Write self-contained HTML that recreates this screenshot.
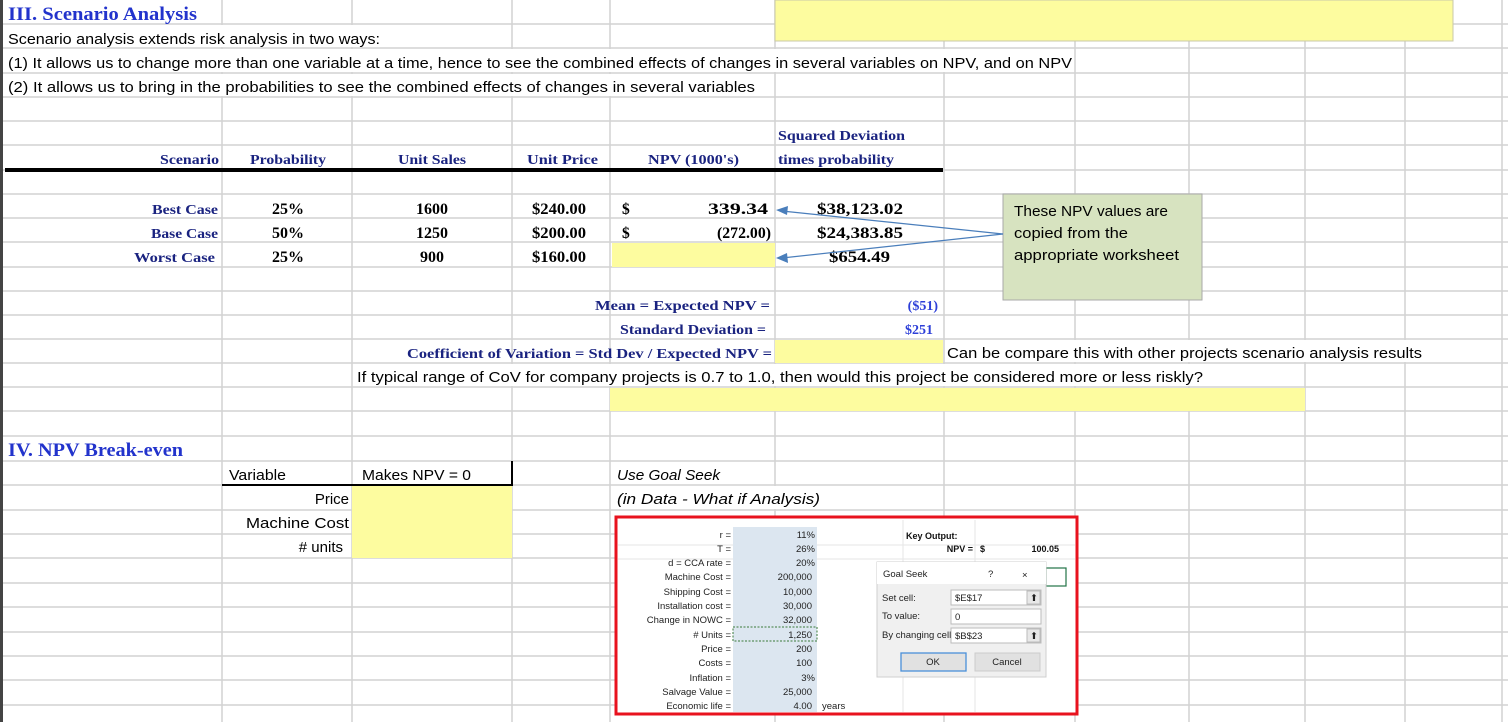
<!DOCTYPE html>
<html><head><meta charset="utf-8"><style>
html,body{margin:0;padding:0;background:#fff;}
svg{display:block}
.c{font-family:"Liberation Sans",sans-serif;font-size:15px;fill:#000}
.t{font-family:"Liberation Serif",serif;font-weight:bold;font-size:14px;fill:#1a2380}
.tb{font-family:"Liberation Serif",serif;font-weight:bold;font-size:15.5px;fill:#000}
.v{font-family:"Liberation Serif",serif;font-weight:bold;font-size:14px;fill:#2d3fd8}
.h{font-family:"Liberation Serif",serif;font-weight:bold;font-size:19px;fill:#2233cc}
.s{font-family:"Liberation Sans",sans-serif;font-size:9.5px;fill:#222}
.sb{font-family:"Liberation Sans",sans-serif;font-size:9px;font-weight:bold;fill:#111}
</style></head><body>
<svg width="1508" height="722" viewBox="0 0 1508 722" xmlns="http://www.w3.org/2000/svg">
<rect width="1508" height="722" fill="#fff"/>
<g stroke="#d2d2d2" stroke-width="1.5">
<line x1="0" y1="24" x2="1508" y2="24"/><line x1="0" y1="48" x2="1508" y2="48"/><line x1="0" y1="73" x2="1508" y2="73"/><line x1="0" y1="97" x2="1508" y2="97"/><line x1="0" y1="121" x2="1508" y2="121"/><line x1="0" y1="145" x2="1508" y2="145"/><line x1="0" y1="170" x2="1508" y2="170"/><line x1="0" y1="194" x2="1508" y2="194"/><line x1="0" y1="218" x2="1508" y2="218"/><line x1="0" y1="242" x2="1508" y2="242"/><line x1="0" y1="267" x2="1508" y2="267"/><line x1="0" y1="291" x2="1508" y2="291"/><line x1="0" y1="315" x2="1508" y2="315"/><line x1="0" y1="339" x2="1508" y2="339"/><line x1="0" y1="363" x2="1508" y2="363"/><line x1="0" y1="387" x2="1508" y2="387"/><line x1="0" y1="411" x2="1508" y2="411"/><line x1="0" y1="436" x2="1508" y2="436"/><line x1="0" y1="461" x2="1508" y2="461"/><line x1="0" y1="485" x2="1508" y2="485"/><line x1="0" y1="510" x2="1508" y2="510"/><line x1="0" y1="534" x2="1508" y2="534"/><line x1="0" y1="558" x2="1508" y2="558"/><line x1="0" y1="583" x2="1508" y2="583"/><line x1="0" y1="607" x2="1508" y2="607"/><line x1="0" y1="632" x2="1508" y2="632"/><line x1="0" y1="656" x2="1508" y2="656"/><line x1="0" y1="680" x2="1508" y2="680"/><line x1="0" y1="705" x2="1508" y2="705"/>
<line x1="222" y1="0" x2="222" y2="722"/><line x1="352" y1="0" x2="352" y2="722"/><line x1="512" y1="0" x2="512" y2="722"/><line x1="610" y1="0" x2="610" y2="722"/><line x1="775" y1="0" x2="775" y2="722"/><line x1="944" y1="0" x2="944" y2="722"/><line x1="1075" y1="0" x2="1075" y2="722"/><line x1="1189" y1="0" x2="1189" y2="722"/><line x1="1305" y1="0" x2="1305" y2="722"/><line x1="1405" y1="0" x2="1405" y2="722"/><line x1="1502" y1="0" x2="1502" y2="722"/>
</g>
<g fill="#fff">
<rect x="4" y="25" width="376" height="22"/>
<rect x="4" y="49" width="1070" height="23"/>
<rect x="4" y="74" width="760" height="22"/>
<rect x="354" y="364" width="949" height="22"/>
<rect x="946" y="340" width="478" height="22"/>
<rect x="513" y="340" width="96" height="22"/>
<rect x="612" y="486" width="210" height="23"/>
</g>
<rect x="0" y="0" width="3" height="722" fill="#444"/>
<rect x="775" y="0" width="678" height="41" fill="#fdfc9f" stroke="#c9c9a8"/>
<rect x="612" y="243" width="163" height="24" fill="#fdfc9f"/>
<rect x="775" y="340" width="168" height="23" fill="#fdfc9f"/>
<rect x="610" y="388" width="695" height="23" fill="#fdfc9f"/>
<rect x="352" y="486" width="160" height="72" fill="#fdfc9f"/>
<text x="8" y="20" class="h" textLength="189" lengthAdjust="spacingAndGlyphs">III. Scenario Analysis</text>
<text x="8" y="44" class="c" textLength="372" lengthAdjust="spacingAndGlyphs">Scenario analysis extends risk analysis in two ways:</text>
<text x="8" y="68" class="c" textLength="1064" lengthAdjust="spacingAndGlyphs">(1) It allows us to change more than one variable at a time, hence to see the combined effects of changes in several variables on NPV, and  on NPV</text>
<text x="8" y="92" class="c" textLength="747" lengthAdjust="spacingAndGlyphs">(2) It allows us to bring in the probabilities  to see the combined effects of changes in several variables</text>
<text x="778" y="140" class="t" textLength="127" lengthAdjust="spacingAndGlyphs">Squared Deviation</text>
<text x="778" y="164" class="t" textLength="116" lengthAdjust="spacingAndGlyphs">times probability</text>
<text x="160" y="164" class="t" textLength="59" lengthAdjust="spacingAndGlyphs">Scenario</text>
<text x="250" y="164" class="t" textLength="76" lengthAdjust="spacingAndGlyphs">Probability</text>
<text x="398" y="164" class="t" textLength="68" lengthAdjust="spacingAndGlyphs">Unit Sales</text>
<text x="527" y="164" class="t" textLength="71" lengthAdjust="spacingAndGlyphs">Unit Price</text>
<text x="648" y="164" class="t" textLength="91" lengthAdjust="spacingAndGlyphs">NPV (1000's)</text>
<rect x="5" y="168" width="938" height="4" fill="#000"/>
<text x="152" y="214" class="t" textLength="66" lengthAdjust="spacingAndGlyphs">Best Case</text>
<text x="151" y="238" class="t" textLength="67" lengthAdjust="spacingAndGlyphs">Base Case</text>
<text x="134" y="262" class="t" textLength="81" lengthAdjust="spacingAndGlyphs">Worst Case</text>
<text x="272" y="214" class="tb" textLength="32" lengthAdjust="spacingAndGlyphs">25%</text><text x="272" y="238" class="tb" textLength="32" lengthAdjust="spacingAndGlyphs">50%</text><text x="272" y="262" class="tb" textLength="32" lengthAdjust="spacingAndGlyphs">25%</text>
<text x="416" y="214" class="tb" textLength="32" lengthAdjust="spacingAndGlyphs">1600</text><text x="416" y="238" class="tb" textLength="32" lengthAdjust="spacingAndGlyphs">1250</text><text x="420" y="262" class="tb" textLength="24" lengthAdjust="spacingAndGlyphs">900</text>
<text x="532" y="214" class="tb" textLength="54" lengthAdjust="spacingAndGlyphs">$240.00</text><text x="532" y="238" class="tb" textLength="54" lengthAdjust="spacingAndGlyphs">$200.00</text><text x="532" y="262" class="tb" textLength="54" lengthAdjust="spacingAndGlyphs">$160.00</text>
<text x="622" y="214" class="tb">$</text><text x="622" y="238" class="tb">$</text>
<text x="708" y="214" class="tb" textLength="60" lengthAdjust="spacingAndGlyphs">339.34</text><text x="717" y="238" class="tb" textLength="54" lengthAdjust="spacingAndGlyphs">(272.00)</text>
<text x="817" y="214" class="tb" font-size="17" textLength="86" lengthAdjust="spacingAndGlyphs">$38,123.02</text>
<text x="817" y="238" class="tb" font-size="17" textLength="86" lengthAdjust="spacingAndGlyphs">$24,383.85</text>
<text x="829" y="262" class="tb" font-size="17" textLength="61" lengthAdjust="spacingAndGlyphs">$654.49</text>
<rect x="1003" y="194" width="199" height="106" fill="#d7e3c0" stroke="#a9a9a9"/>
<text x="1014" y="216" class="c" textLength="154" lengthAdjust="spacingAndGlyphs">These NPV values are</text>
<text x="1014" y="238" class="c" textLength="114" lengthAdjust="spacingAndGlyphs">copied from the</text>
<text x="1014" y="260" class="c" textLength="165" lengthAdjust="spacingAndGlyphs">appropriate worksheet</text>
<g stroke="#4a7ebb" stroke-width="1.2" fill="#4a7ebb">
<line x1="1003" y1="234" x2="782" y2="211"/>
<line x1="1003" y1="234" x2="782" y2="258"/>
<polygon points="776,210 788,206 787,215" stroke="none"/>
<polygon points="776,258 787,253 788,263" stroke="none"/>
</g>
<text x="770" y="310" class="t" text-anchor="end" textLength="175" lengthAdjust="spacingAndGlyphs">Mean = Expected NPV =</text>
<text x="938" y="310" class="v" text-anchor="end">($51)</text>
<text x="766" y="334" class="t" text-anchor="end" textLength="146" lengthAdjust="spacingAndGlyphs">Standard Deviation  =</text>
<text x="933" y="334" class="v" text-anchor="end">$251</text>
<text x="407" y="358" class="t" textLength="365" lengthAdjust="spacingAndGlyphs">Coefficient of Variation = Std Dev / Expected NPV =</text>
<text x="947" y="358" class="c" textLength="475" lengthAdjust="spacingAndGlyphs">Can be compare this with other projects scenario analysis results</text>
<text x="357" y="382" class="c" textLength="846" lengthAdjust="spacingAndGlyphs">If typical range of CoV for company projects is 0.7 to 1.0, then would this project be considered more or less riskly?</text>
<text x="8" y="456" class="h" textLength="175" lengthAdjust="spacingAndGlyphs">IV. NPV Break-even</text>
<text x="229" y="480" class="c" textLength="57" lengthAdjust="spacingAndGlyphs">Variable</text>
<text x="362" y="480" class="c" textLength="109" lengthAdjust="spacingAndGlyphs">Makes NPV = 0</text>
<rect x="222" y="484" width="291" height="2" fill="#000"/>
<rect x="511" y="461" width="2" height="24" fill="#000"/>
<text x="617" y="480" class="c" font-style="italic" textLength="103" lengthAdjust="spacingAndGlyphs">Use Goal Seek</text>
<text x="617" y="504" class="c" font-style="italic" textLength="203" lengthAdjust="spacingAndGlyphs">(in Data - What if Analysis)</text>
<text x="349" y="504" class="c" text-anchor="end">Price</text>
<text x="349" y="528" class="c" text-anchor="end" textLength="103" lengthAdjust="spacingAndGlyphs">Machine Cost</text>
<text x="343" y="552" class="c" text-anchor="end"># units</text>
<rect x="616" y="517" width="461" height="197" fill="#fff"/>
<g stroke="#e6e6e6" stroke-width="1">
<line x1="903" y1="520" x2="903" y2="712"/><line x1="975" y1="520" x2="975" y2="712"/>
<line x1="618" y1="545" x2="1075" y2="545"/><line x1="618" y1="559" x2="1075" y2="559"/>
</g>
<rect x="733" y="527" width="84" height="185" fill="#dce6f0"/>
<g class="s" text-anchor="end">
<text x="731" y="538">r =</text><text x="731" y="552">T =</text><text x="731" y="566">d = CCA rate =</text><text x="731" y="580">Machine Cost =</text><text x="731" y="595">Shipping Cost =</text><text x="731" y="609">Installation cost =</text><text x="731" y="623">Change in NOWC =</text><text x="731" y="638"># Units =</text><text x="731" y="652">Price =</text><text x="731" y="666">Costs =</text><text x="731" y="681">Inflation =</text><text x="731" y="695">Salvage Value =</text><text x="731" y="709">Economic life =</text>
<text x="815" y="538">11%</text><text x="815" y="552">26%</text><text x="815" y="566">20%</text><text x="812" y="580">200,000</text><text x="812" y="595">10,000</text><text x="812" y="609">30,000</text><text x="812" y="623">32,000</text><text x="812" y="638">1,250</text><text x="812" y="652">200</text><text x="812" y="666">100</text><text x="815" y="681">3%</text><text x="812" y="695">25,000</text><text x="812" y="709">4.00</text>
</g>
<rect x="733" y="627" width="84" height="14" fill="none" stroke="#3a7a3a" stroke-dasharray="2,1.5"/>
<text x="822" y="709" class="s">years</text>
<text x="906" y="539" class="sb">Key Output:</text>
<text x="973" y="552" class="sb" text-anchor="end">NPV =</text>
<text x="980" y="552" class="sb">$</text>
<text x="1059" y="552" class="sb" text-anchor="end">100.05</text>
<rect x="1046" y="568" width="20" height="18" fill="none" stroke="#217346" stroke-width="1.2"/>
<rect x="877" y="562" width="169" height="115" fill="#f0f0f0" stroke="#cfcfcf"/>
<rect x="877" y="562" width="169" height="22" fill="#fff"/>
<text x="883" y="577" class="s" font-size="9.5" fill="#333">Goal Seek</text>
<text x="988" y="577" class="s" fill="#555">?</text>
<text x="1022" y="578" class="s" font-size="12" fill="#555">×</text>
<text x="882" y="601" class="s" font-size="8">Set cell:</text>
<text x="882" y="619" class="s" font-size="8">To value:</text>
<text x="882" y="638" class="s" font-size="8">By changing cell:</text>
<rect x="951" y="590" width="90" height="15" fill="#fff" stroke="#bbb"/>
<rect x="951" y="609" width="90" height="15" fill="#fff" stroke="#bbb"/>
<rect x="951" y="628" width="90" height="15" fill="#fff" stroke="#bbb"/>
<rect x="1027" y="591" width="13" height="13" fill="#e8e8e8" stroke="#bbb"/>
<rect x="1027" y="629" width="13" height="13" fill="#e8e8e8" stroke="#bbb"/>
<text x="1030" y="601" class="s" font-size="8">⬆</text><text x="1030" y="639" class="s" font-size="8">⬆</text>
<text x="955" y="601" class="s" font-size="8">$E$17</text>
<text x="955" y="620" class="s" font-size="8">0</text>
<text x="955" y="639" class="s" font-size="8">$B$23</text>
<rect x="901" y="653" width="65" height="18" fill="#e1e1e1" stroke="#4a90d9" stroke-width="1.3"/>
<rect x="975" y="653" width="65" height="18" fill="#e1e1e1" stroke="#ccc"/>
<text x="933" y="665" class="s" font-size="8" text-anchor="middle">OK</text>
<text x="1007" y="665" class="s" font-size="8" text-anchor="middle">Cancel</text>
<rect x="616" y="517" width="461" height="197" fill="none" stroke="#e8121e" stroke-width="3"/>
</svg>
</body></html>
